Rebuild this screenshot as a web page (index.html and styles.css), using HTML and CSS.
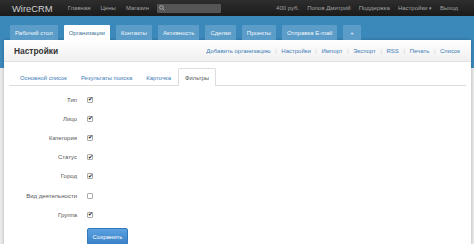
FILE: index.html
```html
<!DOCTYPE html>
<html lang="ru">
<head>
  <meta charset="UTF-8" />
  <title>WireCRM — Настройки</title>
  <link rel="stylesheet" href="styles.css">
</head>
<body>
  <div class="topbar">
    <span class="brand">WireCRM</span>
    <nav class="toplinks">
      <a href="#">Главная</a>
      <a href="#">Цены</a>
      <a href="#">Магазин</a>
    </nav>
    <div class="search"><svg width="6" height="6" viewBox="0 0 10 10"><circle cx="4" cy="4" r="3" fill="none" stroke="#aaa" stroke-width="1.5"/><path d="M6.2 6.2 9 9" stroke="#aaa" stroke-width="1.5"/></svg></div>
    <nav class="toplinks right">
      <span>400 руб.</span>
      <a href="#">Попов Дмитрий</a>
      <a href="#">Поддержка</a>
      <a href="#">Настройки <span class="caret">▾</span></a>
      <a href="#">Выход</a>
    </nav>
  </div>

  <div class="main">
    <div class="menu">
      <a href="#">Рабочий стол</a>
      <a href="#" class="active">Организации</a>
      <a href="#">Контакты</a>
      <a href="#">Активность</a>
      <a href="#">Сделки</a>
      <a href="#">Проекты</a>
      <a href="#">Отправка E-mail</a>
      <a href="#" class="plus">+</a>
    </div>

    <div class="card">
      <div class="card-head">
        <h1>Настройки</h1>
        <div class="head-links">
          <a href="#">Добавить организацию</a><i>|</i>
          <a href="#">Настройки</a><i>|</i>
          <a href="#">Импорт</a><i>|</i>
          <a href="#">Экспорт</a><i>|</i>
          <a href="#">RSS</a><i>|</i>
          <a href="#">Печать</a><i>|</i>
          <a href="#">Список</a>
        </div>
      </div>

      <div class="tabs">
        <a href="#">Основной список</a>
        <a href="#">Результаты поиска</a>
        <a href="#">Карточка</a>
        <a href="#" class="active">Фильтры</a>
      </div>

      <form class="filters">
        <label>Тип</label><input type="checkbox" checked>
        <label>Лицо</label><input type="checkbox" checked>
        <label>Категория</label><input type="checkbox" checked>
        <label>Статус</label><input type="checkbox" checked>
        <label>Город</label><input type="checkbox" checked>
        <label>Вид деятельности</label><input type="checkbox">
        <label>Группа</label><input type="checkbox" checked>
        <span></span><button type="button">Сохранить</button>
      </form>
    </div>
  </div>
</body>
</html>
```

FILE: styles.css
```css
:root {
  font-family: "Liberation Sans", Arial, sans-serif;
  --blue: #3b88bb;
  --link: #3d7cb6;
}
body {
  margin: 0;
  background: #e9e9e9;
  overflow: hidden;
}
a {
  text-decoration: none;
}

/* top bar */
.topbar {
  height: 16px;
  background: linear-gradient(#2e2e2e, #1b1b1b);
  display: flex;
  align-items: center;
  padding: 0 16px 0 12px;
  font-size: 6px;
}
.brand {
  color: #cfcfcf;
  font-size: 9.4px;
  margin-right: 15px;
}
.toplinks {
  display: flex;
  gap: 10px;
}
.toplinks a, .toplinks span {
  color: #a0a0a0;
}
.toplinks.right {
  margin-left: auto;
  gap: 8px;
}
.caret {
  font-size: 5px;
}
.search {
  width: 64px;
  height: 9px;
  margin-left: 8px;
  background: #555;
  border-radius: 1px;
  display: flex;
  align-items: center;
  padding-left: 2px;
  box-sizing: border-box;
}

/* blue band */
.main {
  background: linear-gradient(var(--blue) 0 52px, #e9e9e9 52px);
  padding-top: 9px;
  height: 219px;
}
.menu {
  display: flex;
  gap: 6px;
  padding-left: 10px;
  height: 15px;
}
.menu a {
  background: #5b9dc8;
  color: #f4f8fb;
  font-size: 6px;
  padding: 0 5px;
  display: flex;
  align-items: center;
  border-radius: 1px 1px 0 0;
}
.menu a.active {
  background: #fff;
  color: #3a6f96;
}
.menu a.plus {
  padding: 0 7px;
}

/* card */
.card {
  margin: 0 3px 0 4px;
  background: #fff;
  height: 204px;
  overflow: hidden;
  box-shadow: 0 0 3px rgba(0, 0, 0, 0.25);
}
.card-head {
  height: 22px;
  box-sizing: border-box;
  display: flex;
  align-items: center;
  padding: 0 11px 0 10px;
  background: linear-gradient(#fff, #f0f0f0);
  border-bottom: 1px solid #e2e2e2;
}
.card-head h1 {
  margin: 0;
  font-size: 8.4px;
  color: #333;
}
.head-links {
  margin-left: auto;
  font-size: 6px;
  display: flex;
  gap: 4.6px;
}
.head-links a {
  color: var(--link);
}
.head-links i {
  font-style: normal;
  color: #ccc;
}

/* sub tabs */
.tabs {
  display: flex;
  margin: 6px 5px 0;
  padding-left: 4px;
  border-bottom: 1px solid #ddd;
  height: 17px;
}
.tabs a {
  font-size: 5.9px;
  color: var(--link);
  padding: 0 6px;
  display: flex;
  align-items: center;
  border: 1px solid transparent;
  border-bottom: none;
  margin-bottom: -1px;
}
.tabs a.active {
  background: #fff;
  color: #555;
  border-color: #ddd;
  border-radius: 2px 2px 0 0;
}

/* filters form */
.filters {
  display: grid;
  grid-template-columns: 73px auto;
  grid-auto-rows: 19.2px;
  column-gap: 10px;
  align-items: center;
  justify-content: start;
  padding-top: 4px;
}
.filters label {
  text-align: right;
  font-size: 6px;
  color: #555;
}
.filters input {
  appearance: none;
  margin: 0;
  width: 6px;
  height: 6px;
  border: 1px solid #aaa;
  border-radius: 1px;
  background: #fff;
  position: relative;
}
.filters input:checked::after {
  content: "✔";
  position: absolute;
  left: -0.5px;
  top: -2.5px;
  font-size: 6px;
  color: #222;
}
.filters button {
  margin-top: 6px;
  width: 41px;
  height: 17px;
  background: linear-gradient(#5aa2e0, #3a80c8);
  border: 1px solid #3477bb;
  border-radius: 2px;
  color: #fff;
  font-size: 6px;
  padding: 0;
  font-family: inherit;
}
```
